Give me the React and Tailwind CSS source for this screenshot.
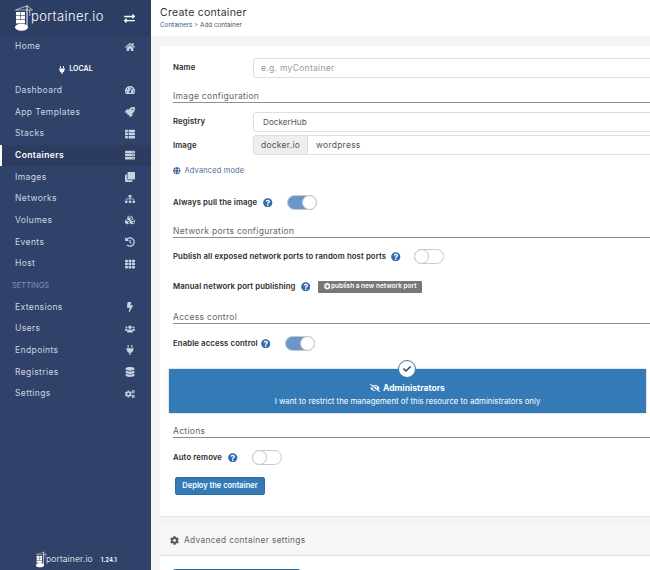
import {
  FaHome, FaPlug, FaTachometerAlt, FaRocket, FaThList, FaServer, FaClone, FaSitemap, FaCubes, FaHistory, FaTh,
  FaBolt, FaUsers, FaDatabase, FaCogs, FaGlobe, FaQuestionCircle, FaExchangeAlt, FaEyeSlash, FaCog, FaPlusCircle, FaCheck,
} from "react-icons/fa"

const font = "font-['Inter','Liberation_Sans',sans-serif]"

const topItems = [
  ["Dashboard", FaTachometerAlt],
  ["App Templates", FaRocket],
  ["Stacks", FaThList],
  ["Containers", FaServer, true],
  ["Images", FaClone],
  ["Networks", FaSitemap],
  ["Volumes", FaCubes],
  ["Events", FaHistory],
  ["Host", FaTh],
]

const settingsItems = [
  ["Extensions", FaBolt],
  ["Users", FaUsers],
  ["Endpoints", FaPlug],
  ["Registries", FaDatabase],
  ["Settings", FaCogs],
]

function Logo({ className }) {
  return (
    <svg viewBox="0 0 18 26" className={className} fill="#fff">
      <path d="M0.5 5 L12 0.8 L17.5 5 M0.5 5 H17.5" fill="none" stroke="#fff" strokeWidth="0.6" />
      <rect x="11.5" y="0.5" width="1" height="21" />
      <rect x="14.5" y="5" width="0.6" height="6" />
      <rect x="1" y="7" width="4" height="3.4" />
      <rect x="5.6" y="7" width="4.4" height="3.4" />
      <rect x="1" y="11" width="4" height="3.4" />
      <rect x="5.6" y="11" width="4.4" height="3.4" />
      <rect x="1" y="15" width="9" height="3.4" />
      <ellipse cx="6.5" cy="22.3" rx="6.5" ry="3.5" />
    </svg>
  )
}

function NavRow({ label, Icon, active }) {
  return (
    <div className={`h-[21.67px] flex items-center pl-[15px] pr-[16px] justify-between border-l-[2px] ${active ? "bg-[#2c3c61] border-white text-white font-semibold" : "border-transparent text-[#ccd4e4]"}`}>
      <span className="-ml-[2px] text-[8.5px] tracking-[0.4px]">{label}</span>
      <Icon className="text-[#c9d1e1] text-[10px]" />
    </div>
  )
}

function Help() {
  return <FaQuestionCircle className="text-[#2f6fad] text-[9.5px] shrink-0" />
}

function Toggle({ on, className = "" }) {
  return (
    <span className={`relative inline-block w-[30px] h-[15px] rounded-full border border-[#c9c9c9] shrink-0 ${on ? "bg-[#6a97c8]" : "bg-white"} ${className}`}>
      <span className={`absolute top-[-1px] h-[15px] w-[15px] rounded-full bg-white border border-[#c4c4c4] ${on ? "right-[-1px]" : "left-[-1px]"}`} />
    </span>
  )
}

function SectionTitle({ children, className = "" }) {
  return (
    <div className={`border-b border-[#8f8f8f] h-[15px] text-[8.5px] leading-[16px] tracking-[0.3px] text-[#666] ${className}`}>
      {children}
    </div>
  )
}

function Label({ children, className = "" }) {
  return <span className={`text-[7.75px] leading-[13px] font-semibold text-[#2b2b2b] tracking-[0.12px] ${className}`}>{children}</span>
}

export default function App() {
  return (
    <div className={`w-[650px] h-[570px] overflow-hidden flex bg-[#f4f4f4] ${font}`}>
      <aside className="w-[151px] shrink-0 bg-[#30426a] flex flex-col">
        <div className="h-[36px] bg-[#2d3e64] flex items-center pl-[15px] pr-[16px]">
          <Logo className="w-[18px] h-[26px] shrink-0" />
          <span className="-ml-[2px] -mt-[2px] text-[13px] tracking-[0.4px] font-light text-white">portainer.io</span>
          <FaExchangeAlt className="ml-auto text-white text-[11px]" />
        </div>
        <NavRow label="Home" Icon={FaHome} />
        <div className="h-[22px] pt-[2px] flex items-center justify-center text-[7px] font-semibold text-white gap-[3px] tracking-[0.1px]">
          <FaPlug className="text-[8px]" />
          LOCAL
        </div>
        {topItems.map(([label, Icon, active]) => (
          <NavRow key={label} label={label} Icon={Icon} active={active} />
        ))}
        <div className="h-[21.67px] flex items-center pl-[12px] text-[7.5px] text-[#7f93c5]">SETTINGS</div>
        {settingsItems.map(([label, Icon]) => (
          <NavRow key={label} label={label} Icon={Icon} />
        ))}
        <div className="mt-auto h-[22px] flex items-center pl-[36px]">
          <Logo className="w-[11px] h-[17px] shrink-0" />
          <span className="-ml-[1px] text-[8.5px] font-light text-white tracking-[0.2px]">portainer.io</span>
          <span className="ml-[8px] text-[6px] font-semibold text-white">1.24.1</span>
        </div>
      </aside>

      <main className="flex-1 min-w-0 flex flex-col">
        <header className="h-[36px] bg-white shrink-0 pl-[9px] pt-[6px]">
          <div className="text-[10.5px] leading-[13px] text-[#333] tracking-[0.25px]">Create container</div>
          <div className="text-[6.3px] leading-[10px] mt-[1px] text-[#555]">
            <span className="text-[#33588f]">Containers</span> &gt; Add container
          </div>
        </header>

        <section className="ml-[9px] mt-[10px] w-[520px] h-[471px] shrink-0 bg-white border-b border-[#e2e2e2] pl-[13px] pt-[12px] pr-[10px]">
          <div className="flex items-center h-[20px]">
            <Label className="w-[80px] -mt-[2px]">Name</Label>
            <div className="flex-1 h-[20px] border border-[#ddd] rounded-[3px] pl-[7px] flex items-center text-[8.5px] tracking-[0.3px] text-[#999]">
              e.g. myContainer
            </div>
          </div>

          <SectionTitle className="mt-[10px]">Image configuration</SectionTitle>

          <div className="flex items-center h-[20px] mt-[9px]">
            <Label className="w-[80px] -mt-[2px]">Registry</Label>
            <div className="flex-1 h-[20px] border border-[#ddd] rounded-[3px] pl-[9px] flex items-center text-[8.2px] text-[#555]">
              DockerHub
            </div>
          </div>
          <div className="flex items-center h-[20px] mt-[3px]">
            <Label className="w-[80px]">Image</Label>
            <div className="flex-1 h-[20px] flex text-[8.5px] text-[#555] tracking-[0.25px]">
              <span className="w-[55px] bg-[#eee] border border-[#ddd] rounded-l-[3px] flex items-center justify-center">docker.io</span>
              <span className="flex-1 border border-l-0 border-[#ddd] pl-[8px] flex items-center">wordpress</span>
            </div>
          </div>

          <div className="flex items-center gap-[4px] mt-[10px] h-[12px] text-[7.4px] tracking-[0.2px] text-[#4a6d9c]">
            <FaGlobe className="text-[#33588f] text-[7.5px]" />
            Advanced mode
          </div>

          <div className="flex items-center h-[15px] mt-[18px]">
            <Label>Always pull the image</Label>
            <span className="ml-[6px]"><Help /></span>
            <Toggle on className="ml-[14px]" />
          </div>

          <SectionTitle className="mt-[13px]">Network ports configuration</SectionTitle>

          <div className="flex items-center h-[15px] mt-[11px]">
            <Label>Publish all exposed network ports to random host ports</Label>
            <span className="ml-[5px]"><Help /></span>
            <Toggle className="ml-[13px]" />
          </div>
          <div className="flex items-center h-[15px] mt-[15px]">
            <Label>Manual network port publishing</Label>
            <span className="ml-[5px]"><Help /></span>
            <span className="ml-[8px] h-[12px] w-[104px] rounded-[1px] bg-[#777] flex items-center justify-center gap-[1px] text-white text-[6.5px] font-semibold">
              <FaPlusCircle className="text-[6.5px]" />
              publish a new network port
            </span>
          </div>

          <SectionTitle className="mt-[15px]">Access control</SectionTitle>

          <div className="flex items-center h-[15px] mt-[12px]">
            <Label>Enable access control</Label>
            <span className="ml-[3px]"><Help /></span>
            <Toggle on className="ml-[15px]" />
          </div>

          <div className="relative -ml-[4px] mt-[18px] w-[477px] h-[44px] bg-[#337ab7] shadow-[0_0_2px_rgba(0,0,0,0.3)] flex flex-col items-center justify-center text-white pt-[6px]">
            <span className="absolute -top-[9px] left-[229px] w-[18px] h-[18px] rounded-full bg-white border border-[#337ab7] flex items-center justify-center">
              <FaCheck className="text-[#30426a] text-[8px]" />
            </span>
            <div className="flex items-center gap-[3px] text-[8.5px] leading-[12px] font-bold">
              <FaEyeSlash className="text-[10px]" />
              Administrators
            </div>
            <div className="text-[7.8px] leading-[12px] mt-[1px]">I want to restrict the management of this resource to administrators only</div>
          </div>

          <SectionTitle className="mt-[10px]">Actions</SectionTitle>

          <div className="flex items-center h-[15px] mt-[12px]">
            <Label>Auto remove</Label>
            <span className="ml-[6px]"><Help /></span>
            <Toggle className="ml-[14px]" />
          </div>

          <button className="block ml-[2px] mt-[12px] w-[90px] h-[18px] rounded-[2px] bg-[#337ab7] border border-[#2e6da4] text-white text-[7.5px] font-semibold">
            Deploy the container
          </button>
        </section>

        <section className="ml-[9px] mt-[8px] w-[520px] flex-1 bg-white min-h-0 overflow-hidden">
          <div className="h-[31px] bg-[#f6f6f6] border-b border-[#e2e2e2] flex items-center pl-[10px] gap-[5px] text-[8.3px] tracking-[0.35px] text-[#666]">
            <FaCog className="text-[#555] text-[9px]" />
            Advanced container settings
          </div>
          <div className="ml-[13px] mt-[13px] w-[127px] h-[10px] bg-[#2f6ea5] rounded-t-[2px]" />
        </section>
      </main>
    </div>
  )
}
